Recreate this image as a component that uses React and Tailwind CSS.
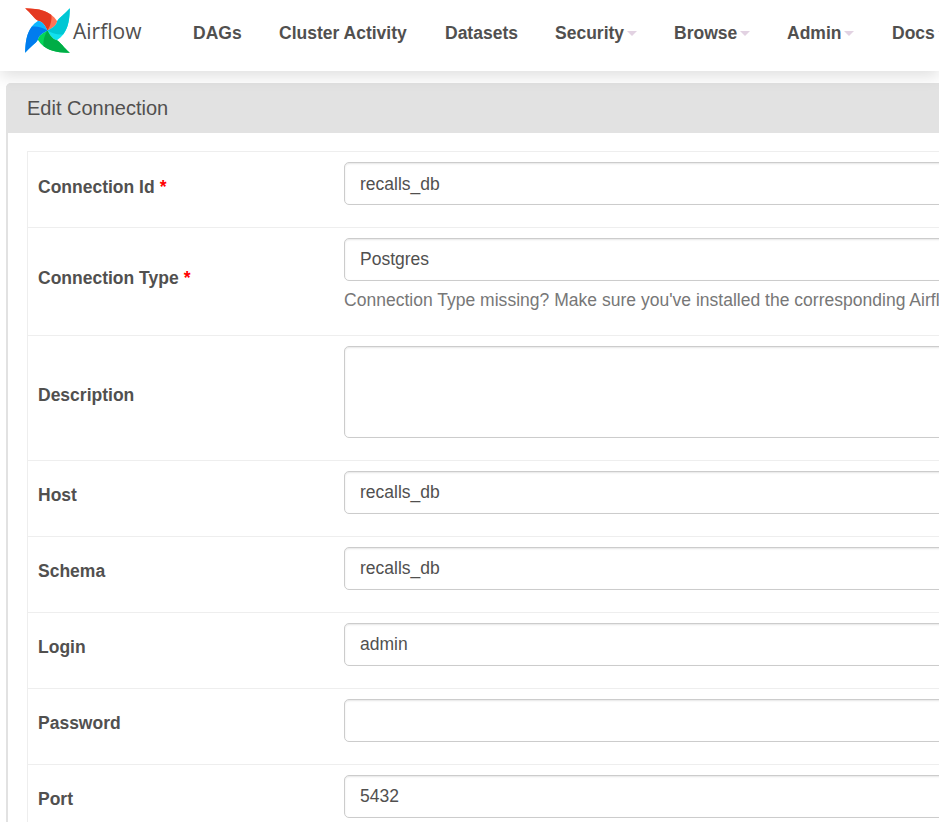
import React from "react";

const BLADES = [
  { angle: 0, dark: "#e43921", light: "#ff7557" },
  { angle: 90, dark: "#00c7d4", light: "#11e1ee" },
  { angle: 180, dark: "#00ad46", light: "#04d659" },
  { angle: 270, dark: "#017cee", light: "#0cb6ff" },
];

function Pinwheel() {
  return (
    <svg viewBox="-67.5 -67.5 135 135" className="size-[45px] shrink-0" aria-hidden="true">
      {BLADES.map((b) => (
        <g key={b.angle} transform={`rotate(${b.angle})`}>
          <path
            fill={b.light}
            d="M0 0C-6-12-14-27-28-29C-38-34-50-52-67-67C-28-66 9-61 29-28C27-14 12-6 0 0Z"
          />
          <path
            fill={b.dark}
            d="M0 0C-6-12-14-27-28-29C-38-34-50-52-67-67C-38-66-10-64 11-47C14-38 11-16 0 0Z"
          />
        </g>
      ))}
    </svg>
  );
}

function NavItem({ label, width, caret }) {
  return (
    <a className={`flex shrink-0 items-center ${width}`}>
      <span>{label}</span>
      {caret && (
        <span className="ml-[3px] mt-[1px] border-x-[5px] border-t-[5px] border-x-transparent border-t-[#e2d2e2]" />
      )}
    </a>
  );
}

function Navbar() {
  return (
    <header className="relative z-10 flex h-[71px] w-full shrink-0 items-start bg-white shadow-[0_5px_15px_rgba(0,0,0,0.13)]">
      <div className="flex w-[193px] shrink-0 items-start pl-[25px] pt-[8px]">
        <Pinwheel />
        <span className="ml-[3px] mt-[7px] font-['Open_Sans',sans-serif] text-[21px] leading-[32px] text-[#51504f]">
          Airflow
        </span>
      </div>
      <nav className="flex pt-[20px] text-[17.5px] font-bold leading-[26px]">
        <NavItem label="DAGs" width="w-[86px]" />
        <NavItem label="Cluster Activity" width="w-[166px]" />
        <NavItem label="Datasets" width="w-[110px]" />
        <NavItem label="Security" width="w-[119px]" caret />
        <NavItem label="Browse" width="w-[113px]" caret />
        <NavItem label="Admin" width="w-[105px]" caret />
        <NavItem label="Docs" width="w-[80px]" caret />
      </nav>
    </header>
  );
}

function Row({ label, required, value, height, boxHeight = "h-[43px]", textTop = "pt-[8px]", labelBottom = "pb-[6px]", help }) {
  return (
    <div className={`flex w-[1100px] border-t border-[#eeeeee] ${height}`}>
      <div className={`flex w-[306px] shrink-0 items-center pl-[10px] font-bold ${labelBottom}`}>
        {label}
        {required && <span className="ml-[5px] text-[#ff0000]">*</span>}
      </div>
      <div className="flex flex-1 flex-col pl-[10px] pt-[10px]">
        <div
          className={`rounded-[5px] border border-[#cccccc] bg-white px-[15px] leading-[25px] shadow-[inset_0_1px_2px_rgba(0,0,0,0.1)] ${textTop} ${boxHeight}`}
        >
          {value}
        </div>
        {help && <p className="mt-[7px] whitespace-nowrap leading-[25px] tracking-[0.015px] text-[#777777]">{help}</p>}
      </div>
    </div>
  );
}

export default function App() {
  return (
    <div className="flex h-[822px] w-[939px] flex-col overflow-hidden bg-white font-['Liberation_Sans',Arial,sans-serif] text-[17.5px] text-[#51504f]">
      <Navbar />
      <main className="ml-[6px] mt-[12px] flex w-[1200px] flex-1 flex-col rounded-tl-[5px] border-l-2 border-[#e2e2e2]">
        <h1 className="-ml-[2px] flex h-[50px] shrink-0 items-center rounded-tl-[5px] bg-[#e2e2e2] pl-[21px] text-[20px]">
          Edit Connection
        </h1>
        <form className="ml-[19px] mt-[18px] flex-1 border-l border-[#eeeeee]">
          <Row
            label="Connection Id"
            required
            value="recalls_db"
            height="h-[76px]"
            textTop="pt-[9px]"
            labelBottom="pb-[4px]"
          />
          <Row
            label="Connection Type"
            required
            value="Postgres"
            height="h-[108px]"
            help="Connection Type missing? Make sure you've installed the corresponding Airflow Provider Package."
          />
          <Row label="Description" height="h-[125px]" boxHeight="h-[92px]" />
          <Row label="Host" value="recalls_db" height="h-[76px]" />
          <Row label="Schema" value="recalls_db" height="h-[76px]" />
          <Row label="Login" value="admin" height="h-[76px]" />
          <Row label="Password" height="h-[76px]" />
          <Row label="Port" value="5432" height="h-[76px]" />
        </form>
      </main>
    </div>
  );
}
